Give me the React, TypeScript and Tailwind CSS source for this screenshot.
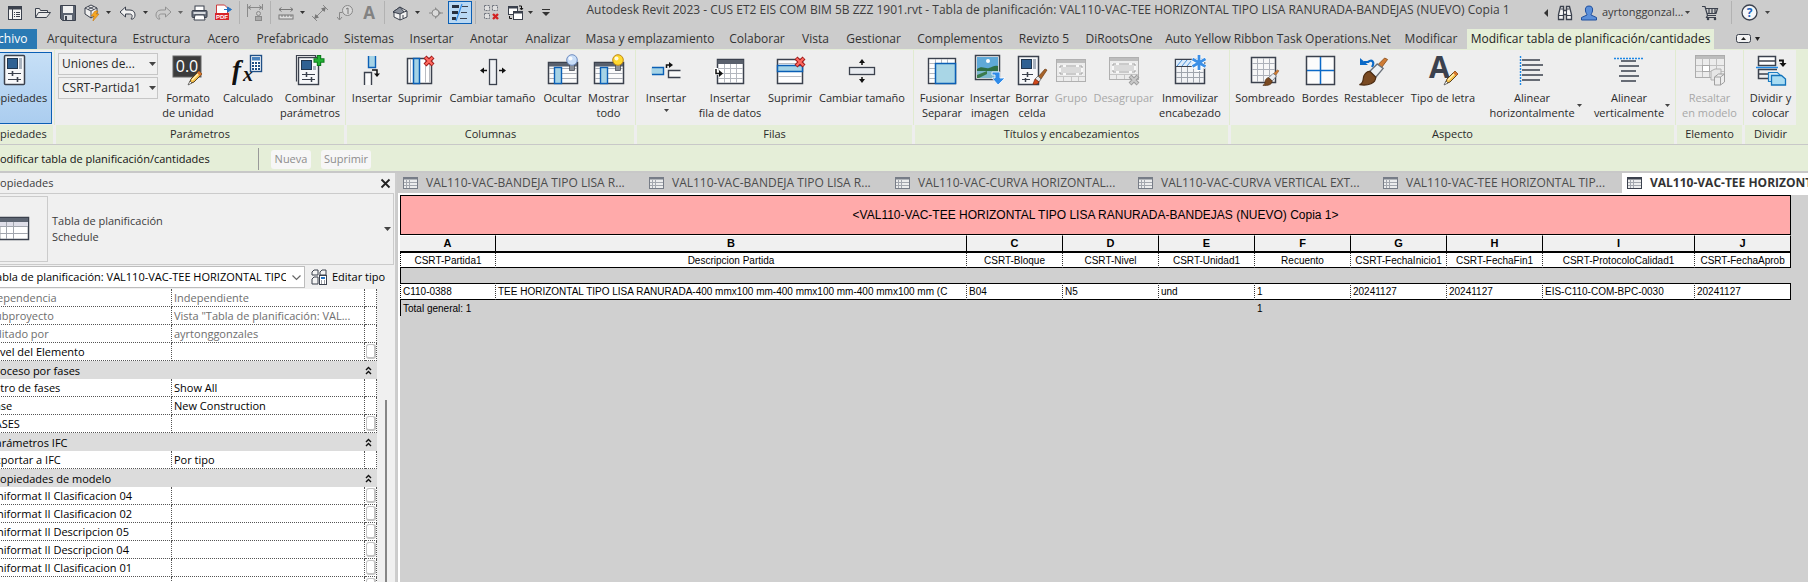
import React from "react";

type Kids = { children?: React.ReactNode };

function Icon({ w = 32, h = 32, vb, children }: Kids & { w?: number; h?: number; vb?: string }) {
  return (
    <svg width={w} height={h} viewBox={vb ?? `0 0 ${w} ${h}`} fill="none" className="shrink-0" aria-hidden="true">
      {children}
    </svg>
  );
}

const INK = "#3b414d";
const BLUE = "#0b5fb5";
const SKY = "#a5d3e6";

function Caret({ color = "#444" }: { color?: string }) {
  return (
    <Icon w={7} h={4}>
      <path d="M0 0h7L3.500 4z" fill={color} />
    </Icon>
  );
}

/* ---------- shared fragments of the ribbon drawings ---------- */

function RedCross({ x, y }: { x: number; y: number }) {
  return (
    <g transform={`translate(${x} ${y})`}>
      <path d="M1 1l8 8M9 1l-8 8" stroke="#a01818" strokeWidth="4.200" />
      <path d="M1.500 1.500l7 7M8.500 1.500l-7 7" stroke="#ff6a60" strokeWidth="2.200" />
    </g>
  );
}

function Pencil({ x, y }: { x: number; y: number }) {
  return (
    <g transform={`translate(${x} ${y})`}>
      <path d="M1 14l2-5 8-8 3 3-8 8z" fill="#f5c04a" stroke="#5a4320" strokeWidth="1" />
      <path d="M11 1l3 3-2 2-3-3z" fill="#d9772e" />
      <path d="M4 10l6-6" stroke="#fff1b8" strokeWidth="1.500" />
      <path d="M0 15l2-4 2 2z" fill="#fff" stroke="#333" strokeWidth=".6" />
    </g>
  );
}

function Brush({ x, y, s = 1 }: { x: number; y: number; s?: number }) {
  return (
    <g transform={`translate(${x} ${y}) scale(${s})`}>
      <path d="M18 0l2 1-6 8-3-2z" fill="#cf7c35" stroke="#8d501d" strokeWidth=".6" />
      <path d="M13 4l4 3-5 6-4-4z" fill="#eceff3" stroke="#6a7079" strokeWidth=".9" />
      <path d="M8 9l4 4c0 4-5 6-11 5 3-1 2-3 3-6 1-2 2-3 4-3z" fill="#7a4a22" stroke="#4c2c12" strokeWidth=".8" />
    </g>
  );
}

function TableFrame() {
  return (
    <>
      <rect x="1.500" y="8.500" width="29" height="21" fill="#fbfbfb" stroke={INK} strokeWidth="1.500" />
      <path d="M2 14.500h28M2 19.500h28M2 24.500h28" stroke="#a9adb5" />
      <rect x="2" y="9" width="28" height="3.500" fill="#59606c" />
      <rect x="7.500" y="13.500" width="7" height="16" fill={SKY} stroke={BLUE} strokeWidth="1.400" />
    </>
  );
}

function Bulb({ lit }: { lit?: boolean }) {
  return (
    <>
      <rect x="22.500" y="10" width="5" height="6.500" fill="#8b9098" stroke="#3b414d" strokeWidth=".7" />
      <circle cx="25" cy="6" r="5.300" fill={lit ? "#ffd92e" : "#c9def8"} stroke={lit ? "#c08a14" : "#6d8cc0"} />
      <circle cx="23.500" cy="4.500" r="2" fill="#fff" opacity=".85" />
    </>
  );
}

/* ---------- ribbon drawings ---------- */

const art: Record<string, React.ReactNode> = {
  properties: (
    <Icon>
      <rect x="5.500" y="1.500" width="20" height="29" rx="1" fill="#f7f8fa" stroke={INK} strokeWidth="1.500" />
      <rect x="8.500" y="4.500" width="10" height="10" fill="#2f6193" stroke="#20364f" />
      <rect x="20" y="4" width="3" height="11" fill="#aab3bf" />
      <path d="M9 19.500h13M9 25.500h13" stroke={INK} />
      <path d="M13.500 17v5M18.500 23v5" stroke={INK} strokeWidth="1.600" />
    </Icon>
  ),
  unit: (
    <Icon>
      <rect x="1" y="2" width="28" height="21" fill="#3c3c3c" stroke="#666" />
      <text x="15" y="18" textAnchor="middle" fontSize="16" fill="#fff" className="font-['Open_Sans',sans-serif]">0.0</text>
      <Pencil x={16} y={16} />
    </Icon>
  ),
  calc: (
    <Icon>
      <text x="0" y="25" fontSize="27" fontStyle="italic" fontWeight="bold" fill="#111" className="font-['Liberation_Serif',serif]">f</text>
      <text x="11" y="27" fontSize="20" fontStyle="italic" fontWeight="bold" fill="#111" className="font-['Liberation_Serif',serif]">x</text>
      <rect x="18.500" y="1.500" width="11" height="16" fill="#fff" stroke="#1f4f86" strokeWidth="1.400" />
      <rect x="20" y="3" width="8" height="3.500" fill="#4b83bd" />
      <path d="M20 9h2m1 0h2m1 0h2M20 12h2m1 0h2m1 0h2M20 15h2m1 0h2m1 0h2" stroke="#1f4f86" strokeWidth="2" />
    </Icon>
  ),
  combine: (
    <Icon>
      <path d="M2.500 27.500v-26h19v3" fill="#fff" stroke={INK} strokeWidth="1.200" />
      <rect x="4.500" y="3.500" width="20" height="27" fill="#f7f8fa" stroke={INK} strokeWidth="1.400" />
      <rect x="7.500" y="6.500" width="10" height="9" fill="#2f6193" stroke="#20364f" />
      <rect x="19" y="12" width="3" height="4" fill="#aab3bf" />
      <path d="M8 20.500h13M8 25.500h13" stroke={INK} />
      <path d="M12.500 18v5M17.500 23v5" stroke={INK} strokeWidth="1.500" />
      <path d="M25 1v11M19.500 6.500h11" stroke="#0b7a1a" strokeWidth="4.400" />
      <path d="M25 2v9M20.500 6.500h9" stroke="#22b233" strokeWidth="2.400" />
    </Icon>
  ),
  colInsert: (
    <Icon>
      <path d="M12.500 2v11.500h7V2z" fill={SKY} />
      <path d="M12.500 2v11.500h7V2" stroke={BLUE} strokeWidth="1.400" />
      <path d="M8.500 31V18.500h7V31z" fill="#fafafa" />
      <path d="M8.500 31V18.500h7V31" stroke={INK} strokeWidth="1.400" />
      <path d="M16 16h5v5" stroke="#111" strokeWidth="1.500" />
      <path d="M18 19.500h6L21 23z" fill="#111" />
    </Icon>
  ),
  colDelete: (
    <Icon>
      <rect x="3.500" y="4.500" width="24" height="25" fill="#fff" stroke={INK} strokeWidth="1.500" />
      <path d="M6.500 5v24M21.500 5v24M25.500 5v24" stroke="#b9bcc2" />
      <rect x="9.500" y="4.500" width="6" height="25" fill={SKY} stroke={BLUE} strokeWidth="1.500" />
      <RedCross x={20} y={2} />
    </Icon>
  ),
  colSize: (
    <Icon>
      <rect x="12.500" y="5.500" width="7" height="25" fill="#eef0f3" stroke={INK} strokeWidth="1.300" />
      <path d="M10 16.500H5M22 16.500h5" stroke="#111" strokeWidth="1.500" />
      <path d="M3 16.500l4-3v6zM29 16.500l-4-3v6z" fill="#111" />
    </Icon>
  ),
  hide: (
    <Icon>
      <TableFrame />
      <Bulb />
    </Icon>
  ),
  show: (
    <Icon>
      <TableFrame />
      <Bulb lit />
    </Icon>
  ),
  rowInsert: (
    <Icon>
      <rect x="1.500" y="13.500" width="12" height="7" fill={SKY} />
      <path d="M2 13.500h11.500v7H2" stroke={BLUE} strokeWidth="1.400" />
      <rect x="18.500" y="16.500" width="12" height="7" fill="#fafafa" />
      <path d="M30.500 16.500h-12v7h12" stroke={INK} strokeWidth="1.400" />
      <path d="M16.500 14v-3h3" stroke="#111" strokeWidth="1.500" />
      <path d="M19 8l4 3-4 3z" fill="#111" />
    </Icon>
  ),
  rowData: (
    <Icon>
      <rect x="3.500" y="5.500" width="26" height="24" fill="#fff" stroke={INK} strokeWidth="1.500" />
      <path d="M10.500 10v19M16.500 10v19M22.500 10v19M4 14.500h25M4 19.500h25M4 24.500h25" stroke="#b4b8bf" />
      <rect x="3.500" y="6" width="26" height="4" fill="#59606c" />
      <path d="M2 14v5h4" stroke="#fff" strokeWidth="4" />
      <path d="M2 15v4.500h4" stroke="#111" strokeWidth="1.500" />
      <path d="M5 16l4 3.500-4 3.500z" fill="#111" />
    </Icon>
  ),
  rowDelete: (
    <Icon>
      <rect x="3.500" y="5.500" width="25" height="24" fill="#fff" stroke={INK} strokeWidth="1.500" />
      <path d="M4 9.500h24M4 22.500h24" stroke="#b9bcc2" />
      <rect x="3.500" y="11.500" width="25" height="6" fill={SKY} stroke={BLUE} strokeWidth="1.500" />
      <RedCross x={21} y={3} />
    </Icon>
  ),
  rowSize: (
    <Icon>
      <rect x="3.500" y="13.500" width="25" height="7" fill="#e8ebf0" stroke={INK} strokeWidth="1.300" />
      <path d="M16 11V7M16 23v4" stroke="#111" strokeWidth="1.500" />
      <path d="M16 5l-3 4h6zM16 29l-3-4h6z" fill="#111" />
    </Icon>
  ),
  merge: (
    <Icon>
      <rect x="2.500" y="4.500" width="27" height="25" fill="#fff" stroke={INK} strokeWidth="1.400" />
      <path d="M9.500 5v24M15.500 5v4M21.500 5v4M3 9.500h26M3 14.500h6M3 19.500h6M3 24.500h6" stroke="#b4b8bf" />
      <rect x="9.500" y="9.500" width="20" height="20" fill="#a9d6e6" stroke={BLUE} strokeWidth="1.500" />
    </Icon>
  ),
  image: (
    <Icon>
      <rect x="1.500" y="1.500" width="24" height="24" fill="#fff" stroke={INK} strokeWidth="1.500" />
      <rect x="3" y="3" width="21" height="12" fill="#5fa9d8" />
      <circle cx="14" cy="7" r="2" fill="#fff" />
      <path d="M3 15c5-4 8 0 12-1s5-3 9-2v5H3z" fill="#2f6f45" />
      <path d="M3 17h21v7H3z" fill="#7cb7cf" />
      <path d="M3 21l10-4v3l-8 4H3z" fill="#3a7a4a" />
      <path d="M18 18h8v6h5l-7 7-6-7h3v-3h-3z" fill="#2f8be8" stroke="#fff" strokeWidth=".8" />
    </Icon>
  ),
  clear: (
    <Icon>
      <rect x="2.500" y="2.500" width="20" height="28" fill="#f7f8fa" stroke={INK} strokeWidth="1.500" />
      <rect x="5.500" y="5.500" width="10" height="9" fill="#2f6193" stroke="#20364f" />
      <rect x="17" y="5" width="3" height="10" fill="#aab3bf" />
      <path d="M6 20.500h11M6 25.500h8" stroke={INK} />
      <path d="M11.500 18v5M9.500 24v4" stroke={INK} strokeWidth="1.500" />
      <path d="M29 15l2 1-6 9-3-2z" fill="#a8642a" stroke="#6b3b14" strokeWidth=".7" />
      <path d="M22 22l3 3-2 3-4-3z" fill="#e8e8e8" stroke="#555" strokeWidth=".7" />
      <path d="M19 25l4 3c-1 2-4 3-6 2z" fill="#d2491c" stroke="#7d2508" strokeWidth=".7" />
    </Icon>
  ),
  group: (
    <Icon>
      <rect x="1.500" y="5.500" width="29" height="22" fill="#ececec" stroke="#b0b0b0" />
      <rect x="2" y="6" width="28" height="3" fill="#bdbdbd" />
      <path d="M2 22.500h28M8.500 22v5M16.500 22v5M23.500 22v5" stroke="#c6c6c6" />
      <rect x="5" y="12" width="22" height="8" fill="#dadada" stroke="#f8f8f8" strokeWidth="2" />
      <path d="M5 14v-2h3M24 12h3v2M27 18v2h-3M8 20H5v-2M11 12h10M11 20h10" stroke="#9c9c9c" />
    </Icon>
  ),
  ungroup: (
    <Icon>
      <rect x="1.500" y="3.500" width="29" height="22" fill="#ececec" stroke="#b0b0b0" />
      <rect x="2" y="4" width="28" height="3" fill="#bdbdbd" />
      <path d="M2 20.500h28M8.500 20v5M16.500 20v5" stroke="#c6c6c6" />
      <rect x="5" y="10" width="22" height="8" fill="#dadada" stroke="#f8f8f8" strokeWidth="2" />
      <path d="M5 12v-2h3M24 10h3v2M27 16v2h-3M8 18H5v-2M11 10h10M11 18h10" stroke="#9c9c9c" />
      <path d="M22 22l8 8M30 22l-8 8" stroke="#9c9c9c" strokeWidth="4" />
      <path d="M22.500 22.500l7 7M29.500 22.500l-7 7" stroke="#cacaca" strokeWidth="2" />
    </Icon>
  ),
  freeze: (
    <Icon>
      <rect x="1.500" y="5.500" width="29" height="24" fill="#f2f3f5" stroke={INK} strokeWidth="1.500" />
      <rect x="2" y="6" width="28" height="6" fill="#dcebfa" />
      <path d="M3 12l5-6M8 12l5-6M13 12l5-6" stroke="#4b93dc" />
      <path d="M2 12.500h28" stroke={INK} />
      <path d="M7.500 13v16M13.500 13v16M19.500 13v16M25.500 13v16M2 18.500h28M2 23.500h28" stroke="#9fa4ac" />
      <path d="M25 1v16M18 5l14 8M32 5l-14 8" stroke="#fff" strokeWidth="4.500" />
      <path d="M25 1v15M18.500 5l13 7.500M31.500 5l-13 7.500" stroke="#3b8fe6" strokeWidth="2.800" />
    </Icon>
  ),
  shade: (
    <Icon>
      <rect x="2.500" y="3.500" width="24" height="25" fill="#f7f7f7" stroke={INK} strokeWidth="1.500" />
      <path d="M8.500 4v24M14.500 4v24M20.500 4v24M3 9.500h23M3 15.500h23M3 21.500h23" stroke="#adb1b9" />
      <Brush x={13} y={16} s={0.85} />
    </Icon>
  ),
  borders: (
    <Icon>
      <rect x="2.500" y="2.500" width="28" height="28" fill="#fcfcfc" stroke={INK} strokeWidth="1.500" />
      <path d="M16.500 3v27M3 16.500h27" stroke="#0b69c7" strokeWidth="1.500" />
    </Icon>
  ),
  reset: (
    <Icon>
      <path d="M6 8h4c4-3 7 0 4 5" stroke="#0b69c7" strokeWidth="2.200" />
      <path d="M2 4v7h8z" fill="#0b69c7" />
      <Brush x={0} y={4} s={1.480} />
    </Icon>
  ),
  font: (
    <Icon>
      <text x="2" y="24" fontSize="30" fontWeight="bold" fill="#3b414d" className="font-['Open_Sans',sans-serif]">A</text>
      <Pencil x={17} y={16} />
    </Icon>
  ),
  alignH: (
    <Icon>
      <path d="M4.500 2v30" stroke="#1e88e5" strokeWidth="1.400" strokeDasharray="2 1" />
      <path d="M6 6h18M6 11h21M6 16h18M6 21h21M6 26h18" stroke={INK} strokeWidth="1.600" />
    </Icon>
  ),
  alignV: (
    <Icon>
      <path d="M1 4.500h30" stroke="#1e88e5" strokeWidth="1.400" strokeDasharray="2 1" />
      <path d="M8 7h15M6 12h20M8 17h15M6 22h20M8 27h15" stroke={INK} strokeWidth="1.600" />
    </Icon>
  ),
  highlight: (
    <Icon>
      <rect x="1.500" y="1.500" width="29" height="22" fill="#ececec" stroke="#acacac" />
      <rect x="2" y="2" width="28" height="3" fill="#bdbdbd" />
      <path d="M8.500 5v18M15.500 5v18M22.500 5v18M2 11.500h28M2 17.500h28" stroke="#c0c0c0" />
      <rect x="8.500" y="11.500" width="7" height="6" fill="#fff" stroke="#a8a8a8" />
      <path d="M17 17l4-2h6v8l-3 3h-7z" fill="#e6e6e6" stroke="#b0b0b0" />
      <path d="M20.500 23l4-3h6v8l-4 3h-6zM20.500 23h6v8M26.500 23l4-3" fill="#ededed" stroke="#a0a0a0" />
    </Icon>
  ),
  split: (
    <Icon>
      <rect x="3.500" y="2.500" width="17" height="9" fill="#fff" stroke={INK} strokeWidth="1.500" />
      <path d="M4 7h16" stroke={INK} strokeWidth="1.500" />
      <path d="M1 13.500h22" stroke="#1e88e5" strokeWidth="1.500" />
      <path d="M13 24.500H3.500v-9H22M4 20h9" stroke={INK} strokeWidth="1.500" />
      <path d="M24 6.500h4V10" stroke="#111" strokeWidth="1.800" />
      <path d="M24.500 9h7L28 13z" fill="#111" />
      <path d="M13.500 18.500h9l3 3v6h-12z" fill="#cfe9f6" stroke="#1e7fc4" strokeWidth="1.200" />
      <path d="M16.500 21.500h10l4 3.500v6h-14z" fill="#a9dcf2" stroke="#1273bb" strokeWidth="1.300" />
    </Icon>
  ),
};

/* ---------- ribbon ---------- */

type Cmd = { icon: string; lines: string[]; w: string; off?: boolean; drop?: "below" | "side" };
type Group = { title: string; w: string; cmds: Cmd[]; pad?: string };

const groups: Group[] = [
  {
    title: "Columnas",
    w: "w-[287px]",
    pad: "pl-[2px]",
    cmds: [
      { icon: "colInsert", lines: ["Insertar"], w: "w-[46px]" },
      { icon: "colDelete", lines: ["Suprimir"], w: "w-[50px]" },
      { icon: "colSize", lines: ["Cambiar tamaño"], w: "w-[95px]" },
      { icon: "hide", lines: ["Ocultar"], w: "w-[45px]" },
      { icon: "show", lines: ["Mostrar", "todo"], w: "w-[47px]" },
    ],
  },
  {
    title: "Filas",
    w: "w-[275px]",
    pad: "pl-[2px]",
    cmds: [
      { icon: "rowInsert", lines: ["Insertar"], w: "w-[54px]", drop: "below" },
      { icon: "rowData", lines: ["Insertar", "fila de datos"], w: "w-[74px]" },
      { icon: "rowDelete", lines: ["Suprimir"], w: "w-[46px]" },
      { icon: "rowSize", lines: ["Cambiar tamaño"], w: "w-[98px]" },
    ],
  },
  {
    title: "Títulos y encabezamientos",
    w: "w-[313px]",
    pad: "pl-[2px]",
    cmds: [
      { icon: "merge", lines: ["Fusionar", "Separar"], w: "w-[50px]" },
      { icon: "image", lines: ["Insertar", "imagen"], w: "w-[46px]" },
      { icon: "clear", lines: ["Borrar", "celda"], w: "w-[38px]" },
      { icon: "group", lines: ["Grupo"], w: "w-[40px]", off: true },
      { icon: "ungroup", lines: ["Desagrupar"], w: "w-[65px]", off: true },
      { icon: "freeze", lines: ["Inmovilizar", "encabezado"], w: "w-[68px]" },
    ],
  },
  {
    title: "Aspecto",
    w: "w-[443px]",
    cmds: [
      { icon: "shade", lines: ["Sombreado"], w: "w-[68px]" },
      { icon: "borders", lines: ["Bordes"], w: "w-[42px]" },
      { icon: "reset", lines: ["Restablecer"], w: "w-[66px]" },
      { icon: "font", lines: ["Tipo de letra"], w: "w-[72px]" },
      { icon: "alignH", lines: ["Alinear", "horizontalmente"], w: "w-[106px]", drop: "side" },
      { icon: "alignV", lines: ["Alinear", "verticalmente"], w: "w-[88px]", drop: "side" },
    ],
  },
  { title: "Elemento", w: "w-[65px]", cmds: [{ icon: "highlight", lines: ["Resaltar", "en modelo"], w: "w-[65px]", off: true }] },
  { title: "Dividir", w: "w-[51px]", cmds: [{ icon: "split", lines: ["Dividir y", "colocar"], w: "w-[51px]" }] },
];

function Command({ cmd }: { cmd: Cmd }) {
  return (
    <button
      type="button"
      disabled={cmd.off}
      className={`relative flex h-full shrink-0 flex-col items-center pt-1 leading-[15px] whitespace-nowrap ${cmd.w} ${cmd.off ? "text-[#a8a8a8]" : "text-[#2a2a2a]"}`}
    >
      {art[cmd.icon]}
      <span className="mt-1 flex flex-col items-center">
        {cmd.lines.map((l) => (
          <span key={l}>{l}</span>
        ))}
      </span>
      {cmd.drop === "below" && (
        <span className="mt-1">
          <Icon w={5} h={3}><path d="M0 0h5L2.500 3z" fill="#444" /></Icon>
        </span>
      )}
      {cmd.drop === "side" && (
        <span className="absolute right-[3px] bottom-[18px]">
          <Icon w={5} h={3}><path d="M0 0h5L2.500 3z" fill="#444" /></Icon>
        </span>
      )}
    </button>
  );
}

function RibbonGroup({ title, w, pad = "", children }: Kids & { title: string; w: string; pad?: string }) {
  return (
    <section aria-label={title} className={`flex shrink-0 flex-col ${w}`}>
      <div className={`flex h-[75px] ${pad}`}>{children}</div>
      <h2 className="h-[19px] bg-[#e5eed8] text-center leading-[18px] text-[#2a2a2a]">{title}</h2>
    </section>
  );
}

function Divider() {
  return (
    <div className="flex w-[3px] shrink-0 justify-center">
      <div className="h-[75px] w-px bg-[#e0ebd0]" />
    </div>
  );
}

function RibbonSelect({ label, value }: { label: string; value: string }) {
  return (
    <label className="relative block">
      <span className="sr-only">{label}</span>
      <select defaultValue={value} className="h-[22px] w-[100px] appearance-none border border-[#c6c6c6] bg-[#f0f0f0] pl-[3px] text-[12px] text-[#2a2a2a]">
        <option>{value}</option>
      </select>
      <span className="pointer-events-none absolute top-[9px] right-[2px]">
        <Caret />
      </span>
    </label>
  );
}

function Ribbon() {
  return (
    <div className="flex h-[95px] bg-[#e5eed8] pt-px text-[11px]">
      <div className="flex shrink-0 bg-[#eeeeee]">
        <RibbonGroup title="Propiedades" w="w-[77px]" pad="pl-[2px]">
          <button
            type="button"
            className="mt-[2px] flex h-[72px] w-[74px] flex-col items-center border border-[#0b5fb5] bg-linear-to-b from-[#c6dff6] to-[#abcdef] pt-px leading-[15px] text-[#2a2a2a]"
          >
            {art.properties}
            <span className="mt-1">Propiedades</span>
          </button>
        </RibbonGroup>
        <Divider />
        <RibbonGroup title="Parámetros" w="w-[288px]" pad="pl-[2px]">
          <div className="flex flex-col gap-[2px] pt-[3px]">
            <RibbonSelect label="Categoría" value="Uniones de..." />
            <RibbonSelect label="Parámetro" value="CSRT-Partida1" />
          </div>
          <Command cmd={{ icon: "unit", lines: ["Formato", "de unidad"], w: "w-[60px]" }} />
          <Command cmd={{ icon: "calc", lines: ["Calculado"], w: "w-[60px]" }} />
          <Command cmd={{ icon: "combine", lines: ["Combinar", "parámetros"], w: "w-[64px]" }} />
        </RibbonGroup>
        {groups.map((g) => (
          <React.Fragment key={g.title}>
            <Divider />
            <RibbonGroup title={g.title} w={g.w} pad={g.pad}>
              {g.cmds.map((c) => (
                <Command key={c.icon} cmd={c} />
              ))}
            </RibbonGroup>
          </React.Fragment>
        ))}
      </div>
    </div>
  );
}

/* ---------- quick access bar ---------- */

function Slot({ w, label, active, children }: Kids & { w: string; label: string; active?: boolean }) {
  return (
    <button
      type="button"
      aria-label={label}
      className={`flex h-[23px] shrink-0 items-center justify-center ${w} ${active ? "border border-[#0b5fb5] bg-[#b9d8f3]" : ""}`}
    >
      {children}
    </button>
  );
}

function Sep({ w }: { w: string }) {
  return (
    <div className={`flex h-[23px] shrink-0 justify-center ${w}`}>
      <div className="w-px bg-[#b2b2b2]" />
    </div>
  );
}

function QuickAccess() {
  return (
    <div className="flex pt-px">
      <Slot w="w-[29px]" label="Inicio">
        <Icon w={16} h={16}>
          <rect x="1.500" y="1.500" width="13" height="13" fill="#f4f4f4" stroke={INK} />
          <path d="M1.500 3h13" stroke={INK} strokeWidth="3" />
          <path d="M5.500 4v10" stroke={INK} />
          <path d="M7 7.500h1m1 0h4M7 9.500h1m1 0h4M7 11.500h1m1 0h4" stroke={INK} />
        </Icon>
      </Slot>
      <Slot w="w-[27px]" label="Abrir">
        <Icon w={17} h={16}>
          <path d="M1.500 12.500v-9h4l1 2h7v2M1.500 12.500l3-5h12l-4 5z" fill="#e8e8e8" stroke={INK} />
        </Icon>
      </Slot>
      <Slot w="w-[24px]" label="Guardar">
        <Icon w={16} h={16}>
          <path d="M.5.500h15v15h-13l-2-2z" fill="#5b6370" stroke={INK} />
          <rect x="3" y="1" width="10" height="7" fill="#f1f1f1" />
          <rect x="4" y="10" width="8" height="5" fill="#d9dce0" />
          <rect x="5" y="11" width="2" height="4" fill={INK} />
        </Icon>
      </Slot>
      <Slot w="w-[22px]" label="Sincronizar">
        <Icon w={17} h={17}>
          <path d="M8 1l6 3v6l-6 4-6-4V4z" fill="#efefef" stroke={INK} />
          <path d="M2 4l6 3 6-3M8 7v7M5 2.500l6 3M11 2.500l-6 3" stroke={INK} strokeWidth=".9" />
          <path d="M12 7l-4 5h3l-1 5 6-7h-3l2-3z" fill="#f5a623" stroke="#c9780c" strokeWidth=".6" />
        </Icon>
      </Slot>
      <Slot w="w-[13px]" label="Opciones de sincronización"><Icon w={5} h={3}><path d="M0 0h5L2.500 3z" fill="#333" /></Icon></Slot>
      <Slot w="w-[24px]" label="Deshacer">
        <Icon w={17} h={14}>
          <path d="M1 6l5.500-5v3H11c3.500 0 5 2.500 5 5 0 2-1 3-2 4h-2c1.500-2 2-5-1.500-5h-4v3z" fill="#f1f1f1" stroke={INK} />
        </Icon>
      </Slot>
      <Slot w="w-[12px]" label="Historial de deshacer"><Icon w={5} h={3}><path d="M0 0h5L2.500 3z" fill="#333" /></Icon></Slot>
      <Slot w="w-[24px]" label="Rehacer">
        <Icon w={17} h={14}>
          <path d="M16 6l-5.500-5v3H6C2.500 4 1 6.500 1 9c0 2 1 3 2 4h2C3.500 11 3 8 6.500 8h4v3z" stroke="#929292" />
        </Icon>
      </Slot>
      <Slot w="w-[11px]" label="Historial de rehacer"><Icon w={5} h={3}><path d="M0 0h5L2.500 3z" fill="#666" /></Icon></Slot>
      <Slot w="w-[26px]" label="Imprimir">
        <Icon w={17} h={16}>
          <rect x="4" y="1" width="9" height="6" fill="#fff" stroke={INK} />
          <rect x="1" y="5.500" width="15" height="7" rx="1" fill="#6a717d" stroke={INK} />
          <rect x="2.500" y="7" width="12" height="2" fill="#d9dce0" />
          <path d="M4 10h9l1 5H3z" fill="#fff" stroke={INK} />
        </Icon>
      </Slot>
      <Slot w="w-[23px]" label="Exportar a PDF">
        <Icon w={17} h={17}>
          <path d="M1.500 10V1h8l3 3v6" fill="#fff" stroke="#cc3d3d" />
          <rect x="0" y="9" width="14" height="7" fill="#d8242a" />
          <text x="7" y="15" textAnchor="middle" fontSize="6" fontWeight="bold" fill="#fff" className="font-['Liberation_Sans',sans-serif]">PDF</text>
          <path d="M9 5.500h5M12.500 3l4 2.500-4 2.500z" stroke="#2371c2" fill="#2371c2" />
        </Icon>
      </Slot>
      <Sep w="w-[8px]" />
      <Slot w="w-[23px]" label="Cota bloqueada">
        <Icon w={16} h={17}>
          <path d="M.5 0v13M15.500 0v6M2 3.500h12M4 1.500l-3 2 3 2M12 1.500l3 2-3 2" stroke="#8a8a8a" />
          <rect x="8.500" y="12.500" width="6" height="4" fill="#aaa" stroke="#8a8a8a" />
          <circle cx="11.500" cy="9.500" r="2" stroke="#8a8a8a" />
        </Icon>
      </Slot>
      <Sep w="w-[8px]" />
      <Slot w="w-[23px]" label="Medir">
        <Icon w={16} h={14}>
          <path d="M1 3.500h14M3.500 1.500L1 3.500l2.500 2M12.500 1.500l2.500 2-2.500 2" stroke="#777" />
          <rect x="1" y="9" width="14" height="4" fill="#ddd" stroke="#777" />
          <path d="M4 9v2M7 9v2M10 9v2M13 9v2" stroke="#777" />
        </Icon>
      </Slot>
      <Slot w="w-[11px]" label="Opciones de medir"><Icon w={5} h={3}><path d="M0 0h5L2.500 3z" fill="#333" /></Icon></Slot>
      <Slot w="w-[24px]" label="Cota alineada">
        <Icon w={16} h={16}>
          <path d="M3 13L13 3M0 11l5 5M11 0l5 5" stroke="#888" />
          <path d="M2 14l1.500-5 3.500 3.500zM14 2l-1.500 5L9 3.500z" fill="#777" />
        </Icon>
      </Slot>
      <Slot w="w-[26px]" label="Etiqueta">
        <Icon w={16} h={16}>
          <circle cx="10.500" cy="5.500" r="5" fill="#d8d8d8" stroke="#888" />
          <path d="M9 4l2-1v6" stroke="#777" />
          <path d="M5.500 7.500h-3v7M0 12l2.500 3L5 12" stroke="#888" />
        </Icon>
      </Slot>
      <Slot w="w-[22px]" label="Texto">
        <span className="text-[17px] leading-4 font-bold text-[#828282]">A</span>
      </Slot>
      <Sep w="w-[8px]" />
      <Slot w="w-[24px]" label="Vista 3D">
        <Icon w={16} h={16}>
          <path d="M1 7l7-5 7 4v6l-7 3-6-3V7.500z" fill="#f1f1f1" stroke={INK} />
          <path d="M8 2l4 5-4 2-7-2 7-5z" fill="#8a909b" stroke={INK} />
          <path d="M8 9v6M12 7l3-1M11 13v-3" stroke={INK} />
        </Icon>
      </Slot>
      <Slot w="w-[11px]" label="Opciones de vista 3D"><Icon w={5} h={3}><path d="M0 0h5L2.500 3z" fill="#333" /></Icon></Slot>
      <Slot w="w-[25px]" label="Sección">
        <Icon w={14} h={14}>
          <path d="M6 1l6 6-6 6z" fill="#8c8c8c" />
          <circle cx="6.500" cy="7" r="3.500" fill="#dcdcdc" stroke="#888" />
          <path d="M0 7h3M11 7h3" stroke="#888" />
        </Icon>
      </Slot>
      <Slot w="w-[24px]" label="Líneas finas" active>
        <Icon w={20} h={19}>
          <path d="M2 3.500h7M2 9.500h6M2 15.500h4" stroke="#26303f" strokeWidth="3" />
          <path d="M12 3.500h6M11 9.500h6M10 15.500h7" stroke="#3b414d" />
          <path d="M12 1L6 18" stroke="#2f8be8" strokeWidth="1.200" />
        </Icon>
      </Slot>
      <Sep w="w-[6px]" />
      <Slot w="w-[26px]" label="Cerrar vistas inactivas">
        <Icon w={16} h={17}>
          <path d="M1.500 1.500h5v5h-5zM9.500 1.500h5v5h-5zM1.500 9.500h5v5h-5z" stroke="#70757e" fill="#e0e0e0" strokeDasharray="2 1" />
          <path d="M10 10l5 5M15 10l-5 5" stroke="#d32222" strokeWidth="2.400" />
        </Icon>
      </Slot>
      <Slot w="w-[22px]" label="Cambiar ventanas">
        <Icon w={17} h={17}>
          <rect x="1.500" y="2.500" width="9" height="8" fill="#fff" stroke={INK} />
          <path d="M1 3.500h10" stroke={INK} strokeWidth="2" />
          <rect x="6.500" y="7.500" width="9" height="8" fill="#fff" stroke={INK} />
          <path d="M6 8.500h10" stroke={INK} strokeWidth="2" />
          <path d="M12 2h2.500v3M13 4l1.500 2L16 4M2.500 12v2.500H5" stroke="#111" />
        </Icon>
      </Slot>
      <Slot w="w-[8px]" label="Lista de ventanas"><Icon w={5} h={3}><path d="M0 0h5L2.500 3z" fill="#333" /></Icon></Slot>
      <Slot w="w-[24px]" label="Personalizar">
        <Icon w={8} h={7}><path d="M0 .5h8" stroke="#333" /><path d="M0 3h8L4 7z" fill="#333" /></Icon>
      </Slot>
    </div>
  );
}

function TitleBar() {
  return (
    <header className="flex h-[29px]">
      <div className="w-6 shrink-0" />
      <QuickAccess />
      <h1 className="min-w-0 flex-1 text-center leading-[20px] whitespace-nowrap text-[#3c3c3c]">
        Autodesk Revit 2023 - CUS ET2 EIS COM BIM 5B ZZZ 1901.rvt - Tabla de planificación: VAL110-VAC-TEE HORIZONTAL TIPO LISA RANURADA-BANDEJAS (NUEVO) Copia 1
      </h1>
      <div className="flex pt-px pr-[37px]">
        <Slot w="w-[16px]" label="Contraer búsqueda"><Icon w={5} h={8}><path d="M4 0v8L0 4z" fill="#333" /></Icon></Slot>
        <Slot w="w-[22px]" label="Buscar">
          <Icon w={16} h={16}>
            <path d="M3.500 1.500h3v4h3v-4h3l2 8v5h-5v-5h-3v5h-5v-5z" fill="#f4f4f4" stroke={INK} strokeWidth="1.300" />
            <path d="M6.500 5.500v4M9.500 5.500v4M2 10.500h4M10 10.500h4M3.500 4h3M9.500 4h3" stroke={INK} />
          </Icon>
        </Slot>
        <button type="button" className="flex h-[23px] items-center gap-[5px] pl-[5px] text-[11px] text-[#3c3c3c]">
          <Icon w={16} h={16}>
            <path d="M8 1c3 0 4 2 3.500 5-.3 2-1.500 3-1.500 4l5.500 2.500V15H.5v-2.500L6 10c0-1-1.200-2-1.500-4C4 3 5 1 8 1z" fill="#5b8fd9" stroke="#1f4f9e" />
          </Icon>
          <span className="flex w-[91px] items-center gap-[2px]">ayrtonggonzal...<Icon w={5} h={3}><path d="M0 0h5L2.500 3z" fill="#444" /></Icon></span>
        </button>
        <Slot w="w-[34px]" label="Tienda">
          <Icon w={17} h={16}>
            <path d="M0 1.500h3l2.500 9H14M3.500 3.500h12L14 8.500H5M5.500 10.500l-1 2H14M7 4v4M10 4v4M13 4v4" stroke={INK} strokeWidth="1.200" />
            <circle cx="6" cy="14" r="1.300" fill={INK} />
            <circle cx="13" cy="14" r="1.300" fill={INK} />
          </Icon>
        </Slot>
        <Sep w="w-[8px]" />
        <Slot w="w-[28px]" label="Ayuda">
          <Icon w={17} h={17}>
            <circle cx="8.500" cy="8.500" r="7.500" fill="#f5f7fa" stroke={INK} strokeWidth="1.300" />
            <text x="8.500" y="13" textAnchor="middle" fontSize="12" fontWeight="bold" fill="#1c63b8" className="font-['Open_Sans',sans-serif]">?</text>
          </Icon>
        </Slot>
        <Slot w="w-[8px]" label="Opciones de ayuda"><Icon w={5} h={3}><path d="M0 0h5L2.500 3z" fill="#444" /></Icon></Slot>
      </div>
    </header>
  );
}

const menus: [string, string][] = [
  ["Arquitectura", "w-[86px]"],
  ["Estructura", "w-[73px]"],
  ["Acero", "w-[51px]"],
  ["Prefabricado", "w-[87px]"],
  ["Sistemas", "w-[66px]"],
  ["Insertar", "w-[59px]"],
  ["Anotar", "w-[56px]"],
  ["Analizar", "w-[62px]"],
  ["Masa y emplazamiento", "w-[142px]"],
  ["Colaborar", "w-[72px]"],
  ["Vista", "w-[45px]"],
  ["Gestionar", "w-[71px]"],
  ["Complementos", "w-[102px]"],
  ["Revizto 5", "w-[66px]"],
  ["DiRootsOne", "w-[84px]"],
  ["Auto Yellow Ribbon Task Operations.Net", "w-[234px]"],
  ["Modificar", "w-[72px]"],
];

function MenuTabs() {
  return (
    <nav className="flex h-5 leading-5 whitespace-nowrap text-[#333]">
      <button type="button" className="w-[61px] shrink-0 bg-[#2a7ab4] text-white">Archivo</button>
      <div className="flex pl-[2px]">
        {menus.map(([m, w]) => (
          <button key={m} type="button" className={`shrink-0 text-center ${w}`}>{m}</button>
        ))}
      </div>
      <button type="button" className="w-[247px] shrink-0 bg-[#e5eed8] text-[#222]">Modificar tabla de planificación/cantidades</button>
      <button type="button" aria-label="Minimizar cinta" className="flex items-center gap-1 pl-[22px]">
        <Icon w={15} h={10}>
          <rect x=".5" y=".5" width="14" height="8" rx="2" fill="#f2f2f2" stroke={INK} />
          <path d="M5 6h5L7.500 3z" fill="#222" />
        </Icon>
        <Icon w={5} h={4}><path d="M0 0h5L2.500 4z" fill="#222" /></Icon>
      </button>
    </nav>
  );
}

function OptionsBar() {
  return (
    <div className="flex h-[29px] items-center border-t border-b-2 border-t-[#c8c8c8] border-b-[#c8c8c8] bg-[#e5eed8] pt-[2px] text-[11px] text-[#111]">
      <span className="w-[283px] shrink-0 border-r border-[#999] pl-[14px] leading-[22px]">Modificar tabla de planificación/cantidades</span>
      <button type="button" disabled className="ml-3 h-[19px] w-10 rounded-[3px] bg-[#f6f6f6] text-[#8d8d8d]">Nueva</button>
      <button type="button" disabled className="ml-[10px] h-[19px] w-[50px] rounded-[3px] bg-[#f6f6f6] text-[#8d8d8d]">Suprimir</button>
    </div>
  );
}

/* ---------- properties palette ---------- */

type Row = { head?: boolean; name: string; value?: string; dim?: boolean; btn?: boolean };

const rows: Row[] = [
  { name: "Dependencia", value: "Independiente", dim: true },
  { name: "Subproyecto", value: 'Vista "Tabla de planificación: VAL...', dim: true },
  { name: "Editado por", value: "ayrtonggonzales", dim: true },
  { name: "Nivel del Elemento", btn: true },
  { head: true, name: "Proceso por fases" },
  { name: "Filtro de fases", value: "Show All" },
  { name: "Fase", value: "New Construction" },
  { name: "FASES", btn: true },
  { head: true, name: "Parámetros IFC" },
  { name: "Exportar a IFC", value: "Por tipo" },
  { head: true, name: "Propiedades de modelo" },
  { name: "Uniformat II Clasificacion 04", btn: true },
  { name: "Uniformat II Clasificacion 02", btn: true },
  { name: "Uniformat II Descripcion 05", btn: true },
  { name: "Uniformat II Descripcion 04", btn: true },
  { name: "Uniformat II Clasificacion 01", btn: true },
  { name: "Uniformat II Descripcion 03", btn: true },
];

function PropertyGrid() {
  return (
    <div className="flex min-h-0 flex-1 overflow-hidden">
      <table className="w-[401px] table-fixed border-separate border-spacing-0 self-start bg-white leading-[17px] whitespace-nowrap text-black">
        <colgroup>
          <col className="w-[196px]" />
          <col className="w-[193px]" />
          <col className="w-[12px]" />
        </colgroup>
        <tbody>
          {rows.map((r) =>
            r.head ? (
              <tr key={r.name} className="h-[18px] bg-[#dcdcdc]">
                <th colSpan={2} scope="colgroup" className="p-0 pl-[13px] text-left font-normal">{r.name}</th>
                <td className="p-0">
                  <button type="button" aria-label={`Contraer ${r.name}`} className="block">
                    <Icon w={7} h={9}><path d="M1 4l2.500-2.500L6 4M1 8l2.500-2.500L6 8" stroke="#111" strokeWidth="1.400" /></Icon>
                  </button>
                </td>
              </tr>
            ) : (
              <tr key={r.name} className={`h-[18px] ${r.dim ? "text-[#6e6e6e]" : ""}`}>
                <th scope="row" className="border-r border-b border-dotted border-[#555] p-0 pl-[13px] text-left font-normal">{r.name}</th>
                <td className="overflow-hidden border-r border-b border-dotted border-[#555] p-0 pl-[2px]">{r.value}</td>
                <td className="border-r border-b border-dotted border-[#555] p-0 pl-px">
                  {r.btn && <button type="button" aria-label={`Asociar ${r.name}`} className="block h-[15px] w-[10px] rounded-[3px] border border-r-2 border-b-2 border-[#c4c4c4] bg-white" />}
                </td>
              </tr>
            ),
          )}
        </tbody>
      </table>
      <div className="flex flex-1 pt-[111px] pl-2">
        <div className="w-[2px] bg-[#868686]" />
      </div>
    </div>
  );
}

function PropertiesPalette() {
  return (
    <aside className="flex w-[421px] shrink-0 flex-col border-r-2 border-[#cdcdcd] bg-[#f0f0f0] text-[11px]">
      <div className="flex h-5 shrink-0 items-center justify-between pr-1 pl-[13px] text-[#3c3c3c]">
        <h2>Propiedades</h2>
        <button type="button" aria-label="Cerrar propiedades">
          <Icon w={11} h={11}><path d="M1.500 1.500l8 8M9.500 1.500l-8 8" stroke="#222" strokeWidth="1.800" /></Icon>
        </button>
      </div>
      <button type="button" className="mr-px flex h-[72px] shrink-0 items-center border border-[#cbcbcb] pr-[2px] text-left leading-4 text-[#3c3c3c]">
        <span className="flex h-[66px] w-[71px] items-center justify-end border border-[#cbcbcb] pr-[17px]">
          <Icon w={32} h={26}>
            <rect x="1.500" y="1.500" width="29" height="22" fill="#fff" stroke={INK} strokeWidth="1.500" />
            <rect x="2" y="5" width="28" height="6" fill="#dedee8" />
            <path d="M8.500 5v18M15.500 5v18M2 10.500h28M2 17.500h28" stroke="#a2a6ae" />
            <rect x="2" y="2" width="28" height="4" fill="#5d6572" />
          </Icon>
        </span>
        <span className="flex-1 pl-[4px]">
          Tabla de planificación
          <br />
          Schedule
        </span>
        <Caret />
      </button>
      <div className="flex h-[24px] shrink-0 items-center">
        <label className="relative block">
          <span className="sr-only">Selector de instancia</span>
          <select
            defaultValue="a"
            className="block h-[22px] w-[329px] appearance-none border border-[#bdbdbd] bg-white pr-[18px] pl-[13px] text-black"
          >
            <option value="a">Tabla de planificación: VAL110-VAC-TEE HORIZONTAL TIPO LISA</option>
          </select>
          <span className="pointer-events-none absolute top-[9px] right-1">
            <Icon w={9} h={6}><path d="M.5.500l4 4 4-4" stroke="#666" strokeWidth="1.200" /></Icon>
          </span>
        </label>
        <button type="button" className="flex items-center gap-[5px] pl-[6px] whitespace-nowrap text-black">
          <Icon w={16} h={17}>
            <path d="M1 3l2-2h4v5H1zM9 3l2-2h4v5H9zM1 10l2-2h4v7H1z" fill="#f4f4f4" stroke={INK} />
            <rect x="8.500" y="6.500" width="7" height="9" fill="#fff" stroke={INK} />
            <path d="M10 9h4" stroke="#2371c2" strokeWidth="2" />
            <path d="M10 12h1m2 0h1M10 14h1m2 0h1" stroke={INK} />
          </Icon>
          Editar tipo
        </button>
      </div>
      <PropertyGrid />
    </aside>
  );
}

/* ---------- schedule view ---------- */

const docTabs: [string, string][] = [
  ["VAL110-VAC-BANDEJA TIPO LISA R...", "w-[246px]"],
  ["VAL110-VAC-BANDEJA TIPO LISA R...", "w-[246px]"],
  ["VAL110-VAC-CURVA HORIZONTAL...", "w-[243px]"],
  ["VAL110-VAC-CURVA VERTICAL EXT...", "w-[245px]"],
  ["VAL110-VAC-TEE HORIZONTAL TIP...", "w-[245px]"],
];

function SheetIcon({ dark }: { dark?: boolean }) {
  const c = dark ? "#3b414d" : "#777d87";
  return (
    <Icon w={15} h={12}>
      <rect x=".5" y=".5" width="14" height="11" fill="#eceded" stroke={c} />
      <path d="M1 1.500h13" stroke={c} strokeWidth="2" />
      <path d="M1 5.500h13M1 8.500h13M3.500 3v8M6.500 3v8" stroke="#a3a7ae" />
    </Icon>
  );
}

const columns: { l: string; name: string; v: string; w: string }[] = [
  { l: "A", name: "CSRT-Partida1", v: "C110-0388", w: "w-[96px]" },
  { l: "B", name: "Descripcion Partida", v: "TEE HORIZONTAL TIPO LISA RANURADA-400 mmx100 mm-400 mmx100 mm-400 mmx100 mm (C", w: "w-[471px]" },
  { l: "C", name: "CSRT-Bloque", v: "B04", w: "w-[96px]" },
  { l: "D", name: "CSRT-Nivel", v: "N5", w: "w-[96px]" },
  { l: "E", name: "CSRT-Unidad1", v: "und", w: "w-[96px]" },
  { l: "F", name: "Recuento", v: "1", w: "w-[96px]" },
  { l: "G", name: "CSRT-FechaInicio1", v: "20241127", w: "w-[96px]" },
  { l: "H", name: "CSRT-FechaFin1", v: "20241127", w: "w-[96px]" },
  { l: "I", name: "CSRT-ProtocoloCalidad1", v: "EIS-C110-COM-BPC-0030", w: "w-[152px]" },
  { l: "J", name: "CSRT-FechaAprob", v: "20241127", w: "w-[96px]" },
];

const cellEdge = "border-r border-dotted border-r-[#333] last:border-r-black last:border-solid first:border-l first:border-l-black";

function Schedule() {
  return (
    <table className="w-[1391px] table-fixed border-separate border-spacing-0 font-['Liberation_Sans',Arial,sans-serif] text-[10px] leading-[13px] whitespace-nowrap text-black">
      <colgroup>
        {columns.map((c) => (
          <col key={c.l} className={c.w} />
        ))}
      </colgroup>
      <thead>
        <tr className="h-10">
          <th colSpan={10} className="border border-black bg-[#ffaaaa] p-0 text-[12px] font-normal">
            &lt;VAL110-VAC-TEE HORIZONTAL TIPO LISA RANURADA-BANDEJAS (NUEVO) Copia 1&gt;
          </th>
        </tr>
        <tr className="h-[18px] text-[11px]">
          {columns.map((c) => (
            <th key={c.l} className="border-t border-r border-b-2 border-black border-t-white bg-[#f0f0f0] p-0">{c.l}</th>
          ))}
        </tr>
        <tr className="h-[15px]">
          {columns.map((c) => (
            <th key={c.l} scope="col" className={`overflow-hidden bg-white p-0 font-normal shadow-[inset_0_-1px_0_#000] ${cellEdge}`}>{c.name}</th>
          ))}
        </tr>
      </thead>
      <tbody>
        <tr className="h-[15px]">
          <td colSpan={10} className="border-l border-black p-0" />
        </tr>
        <tr className="h-[17px]">
          {columns.map((c) => (
            <td key={c.l} className={`overflow-hidden bg-white p-0 pl-[2px] shadow-[inset_0_1px_0_#000,inset_0_-1px_0_#000] ${cellEdge}`}>{c.v}</td>
          ))}
        </tr>
      </tbody>
      <tfoot>
        <tr className="h-4">
          <td colSpan={5} className="border-l border-black p-0 pl-[2px]">Total general: 1</td>
          <td colSpan={5} className="p-0 pl-[2px]">1</td>
        </tr>
      </tfoot>
    </table>
  );
}

function Workspace() {
  return (
    <main className="flex min-w-0 flex-1 flex-col bg-[#cbcbcb]">
      <div role="tablist" className="flex h-5 shrink-0 leading-5 whitespace-nowrap text-[#4c4c4c]">
        {docTabs.map(([t, w], i) => (
          <button key={i} role="tab" type="button" aria-selected={false} className={`flex shrink-0 items-center gap-2 pl-[6px] ${w}`}>
            <SheetIcon />
            {t}
          </button>
        ))}
        <button role="tab" type="button" aria-selected className="flex min-w-0 flex-1 items-center gap-2 overflow-hidden bg-white pl-[5px] font-bold text-[#333]">
          <SheetIcon dark />
          VAL110-VAC-TEE HORIZONTAL TIPO LISA
        </button>
      </div>
      <div className="ml-px min-h-0 flex-1 overflow-hidden border-t-2 border-l-2 border-white bg-[#d0d0d0]">
        <Schedule />
      </div>
    </main>
  );
}

export default function App() {
  return (
    <div className="h-screen overflow-hidden bg-[#cccccc] font-['Open_Sans','Noto_Sans',sans-serif] text-[12px]">
      <div className="-ml-6 flex h-full flex-col">
        <TitleBar />
        <MenuTabs />
        <Ribbon />
        <OptionsBar />
        <div className="flex min-h-0 flex-1">
          <PropertiesPalette />
          <Workspace />
        </div>
      </div>
    </div>
  );
}
